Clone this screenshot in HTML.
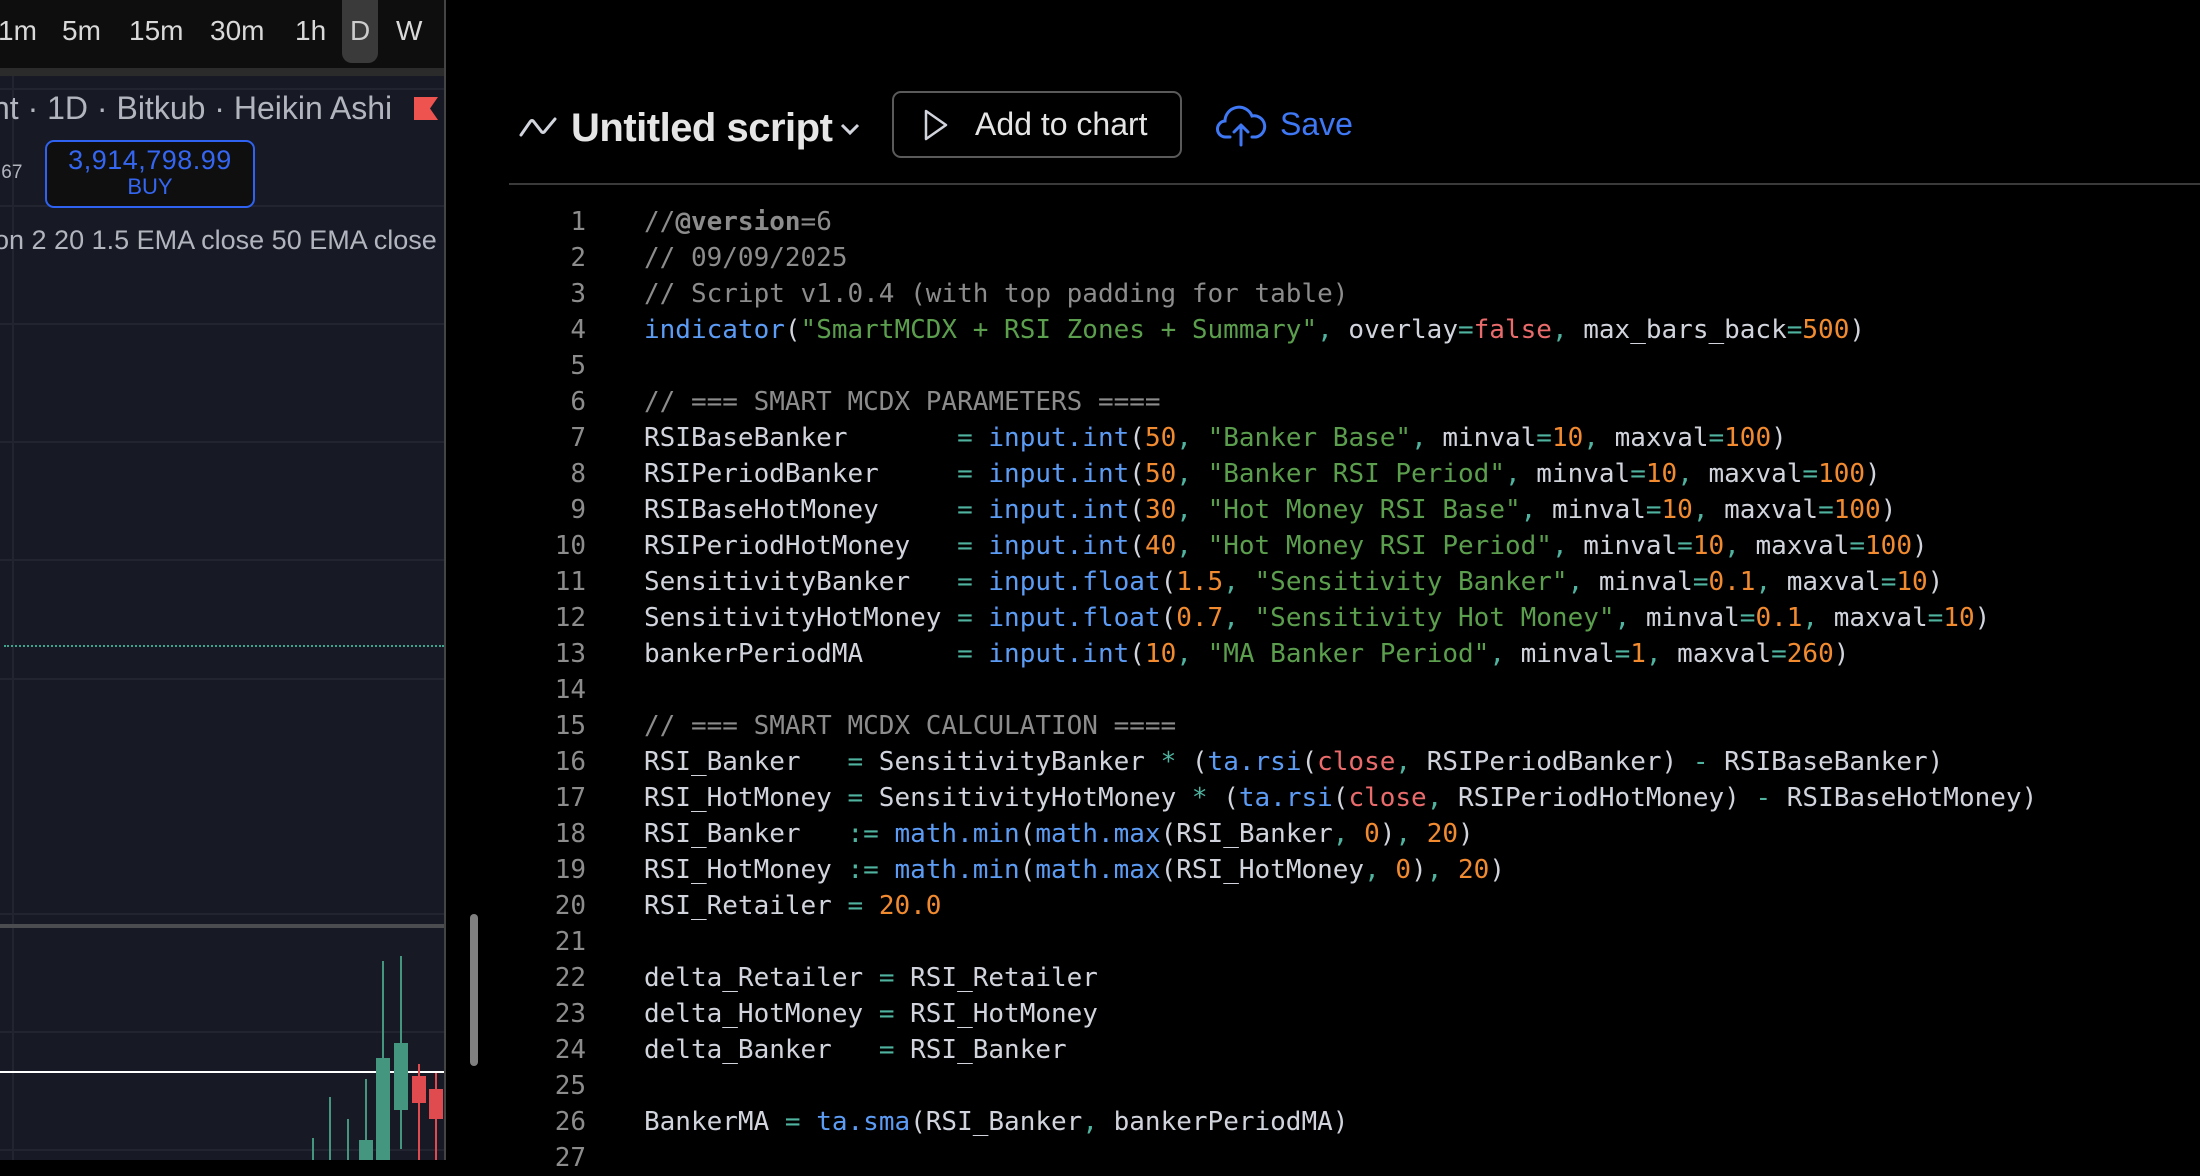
<!DOCTYPE html>
<html><head><meta charset="utf-8"><style>
*{margin:0;padding:0;box-sizing:border-box}
body{width:2200px;height:1160px;background:#000;overflow:hidden;position:relative;font-family:"Liberation Sans",sans-serif}
.abs{position:absolute}
#left{left:0;top:0;width:444px;height:1160px;background:#171a24;overflow:hidden}
#tb{left:0;top:0;width:444px;height:68px;background:#0e0e0e}
.tf{position:absolute;top:15px;font-size:28px;color:#d9d9d9}
.gl{position:absolute;left:0;width:444px;height:2px;background:#22252f}
pre{font-family:"DejaVu Sans Mono","Liberation Mono",monospace;font-size:26px;line-height:36px;color:#d1d4dc}
.c{color:#8c8c8c}.f{color:#5c9cf5}.s{color:#5b9e4d}.n{color:#f28b30}.o{color:#4fb3a0}.k{color:#ea6b6b}
</style></head><body>
<div id="left" class="abs">
  <div id="tb" class="abs"></div>
  <div class="abs" style="left:342px;top:0;width:36px;height:63px;background:#3a3a3a;border-radius:0 0 10px 10px"></div>
  <div class="tf" style="left:-2px">1m</div>
  <div class="tf" style="left:62px">5m</div>
  <div class="tf" style="left:129px">15m</div>
  <div class="tf" style="left:210px">30m</div>
  <div class="tf" style="left:295px">1h</div>
  <div class="tf" style="left:350px;color:#ccc">D</div>
  <div class="tf" style="left:396px">W</div>
  <div class="abs" style="left:0;top:68px;width:444px;height:8px;background:#2b2b2b"></div>
  <div class="abs" style="left:12px;top:76px;width:2px;height:1084px;background:#22252f"></div>
  <div class="gl" style="top:88px"></div><div class="gl" style="top:205px"></div><div class="gl" style="top:323px"></div><div class="gl" style="top:441px"></div><div class="gl" style="top:559px"></div><div class="gl" style="top:678px"></div><div class="gl" style="top:913px"></div><div class="gl" style="top:1031px"></div><div class="gl" style="top:1149px"></div>
  <div class="abs" style="left:0;top:924px;width:444px;height:4px;background:#4b4c50"></div>
  <div class="abs" style="left:4px;top:645px;width:440px;height:0;border-top:2px dotted #3aa58c"></div>
  <div class="abs" style="left:-8px;top:90px;font-size:32px;color:#b2b5be;white-space:nowrap">nt · 1D · Bitkub · Heikin Ashi</div>
  <svg class="abs" style="left:414px;top:97px" width="24" height="23"><path d="M0 0H24L16 11.5L24 23H0Z" fill="#ef5350"/></svg>
  <div class="abs" style="left:-4px;top:162px;font-size:19px;color:#b2b5be">.67</div>
  <div class="abs" style="left:45px;top:140px;width:210px;height:68px;border:2px solid #2f62f0;border-radius:9px;background:#0f0f0f;text-align:center;color:#3566f2">
    <div style="font-size:27px;margin-top:2px;line-height:32px;letter-spacing:0.5px">3,914,798.99</div>
    <div style="font-size:22px;line-height:22px">BUY</div>
  </div>
  <div class="abs" style="left:-6px;top:225px;font-size:27px;color:#b2b5be;white-space:nowrap">on 2 20 1.5 EMA close 50 EMA close</div>
  <div class="abs" style="left:0;top:1071px;width:444px;height:2px;background:#fff"></div>
  <svg class="abs" style="left:0;top:900px" width="444" height="260">
    <g stroke="#44967f" stroke-width="2"><line x1="313" y1="238" x2="313" y2="260"/><line x1="330" y1="197" x2="330" y2="260"/><line x1="348" y1="219" x2="348" y2="260"/><line x1="366" y1="179" x2="366" y2="260"/><line x1="383" y1="61" x2="383" y2="260"/><line x1="401" y1="56" x2="401" y2="249"/></g>
    <g fill="#44967f"><rect x="359" y="240" width="14" height="20"/><rect x="376" y="158" width="14" height="102"/><rect x="394" y="143" width="14" height="67"/></g>
    <g stroke="#e04b4f" stroke-width="2"><line x1="419" y1="164" x2="419" y2="260"/><line x1="436" y1="173" x2="436" y2="260"/></g>
    <g fill="#e04b4f"><rect x="412" y="176" width="14" height="27"/><rect x="429" y="189" width="14" height="30"/></g>
  </svg>
</div>
<div class="abs" style="left:444px;top:0;width:2px;height:1160px;background:#444"></div>
<div class="abs" style="left:470px;top:914px;width:8px;height:152px;background:#808080;border-radius:4px"></div>

<svg class="abs" style="left:519px;top:115px" width="38" height="24"><path d="M2 20 L11 7 Q13 4 15 7 L22 16 Q24 19 26 16 L36 4" stroke="#d1d4dc" stroke-width="3" fill="none" stroke-linecap="round" stroke-linejoin="round"/></svg>
<div class="abs" style="left:571px;top:106px;font-size:40px;font-weight:bold;color:#e5e5e5;white-space:nowrap;letter-spacing:-0.5px">Untitled script</div>
<svg class="abs" style="left:840px;top:123px" width="20" height="14"><path d="M2 2L10 10L18 2" stroke="#d1d4dc" stroke-width="3" fill="none"/></svg>
<div class="abs" style="left:892px;top:91px;width:290px;height:67px;border:2px solid #5a5a5a;border-radius:9px"></div>
<svg class="abs" style="left:922px;top:108px" width="28" height="34"><path d="M4 3L24 17L4 31Z" stroke="#d1d4dc" stroke-width="2.5" fill="none" stroke-linejoin="round"/></svg>
<div class="abs" style="left:975px;top:106px;font-size:32px;color:#e5e5e5">Add to chart</div>
<svg class="abs" style="left:1216px;top:103px" width="52" height="44"><path d="M14 34H10A8 8 0 0 1 9 18A14 14 0 0 1 36 13A10 10 0 0 1 40 34H36" stroke="#3f78f5" stroke-width="3" fill="none" stroke-linecap="round"/><path d="M25 42V22M18 29L25 22L32 29" stroke="#3f78f5" stroke-width="3" fill="none" stroke-linecap="round" stroke-linejoin="round"/></svg>
<div class="abs" style="left:1280px;top:106px;font-size:32px;color:#3f78f5">Save</div>
<div class="abs" style="left:509px;top:183px;width:1691px;height:2px;background:#3a3a3a"></div>

<pre class="abs" style="left:520px;top:204px;width:66px;text-align:right;color:#8c8c8c">1
2
3
4
5
6
7
8
9
10
11
12
13
14
15
16
17
18
19
20
21
22
23
24
25
26
27</pre>
<pre class="abs" style="left:644px;top:204px"><span class="c">//<b>@version</b>=6</span>
<span class="c">// 09/09/2025</span>
<span class="c">// Script v1.0.4 (with top padding for table)</span>
<span class="f">indicator</span>(<span class="s">"SmartMCDX + RSI Zones + Summary"</span><span class="o">,</span> overlay<span class="o">=</span><span class="k">false</span><span class="o">,</span> max_bars_back<span class="o">=</span><span class="n">500</span>)

<span class="c">// === SMART MCDX PARAMETERS ====</span>
RSIBaseBanker       <span class="o">=</span> <span class="f">input.int</span>(<span class="n">50</span><span class="o">,</span> <span class="s">"Banker Base"</span><span class="o">,</span> minval<span class="o">=</span><span class="n">10</span><span class="o">,</span> maxval<span class="o">=</span><span class="n">100</span>)
RSIPeriodBanker     <span class="o">=</span> <span class="f">input.int</span>(<span class="n">50</span><span class="o">,</span> <span class="s">"Banker RSI Period"</span><span class="o">,</span> minval<span class="o">=</span><span class="n">10</span><span class="o">,</span> maxval<span class="o">=</span><span class="n">100</span>)
RSIBaseHotMoney     <span class="o">=</span> <span class="f">input.int</span>(<span class="n">30</span><span class="o">,</span> <span class="s">"Hot Money RSI Base"</span><span class="o">,</span> minval<span class="o">=</span><span class="n">10</span><span class="o">,</span> maxval<span class="o">=</span><span class="n">100</span>)
RSIPeriodHotMoney   <span class="o">=</span> <span class="f">input.int</span>(<span class="n">40</span><span class="o">,</span> <span class="s">"Hot Money RSI Period"</span><span class="o">,</span> minval<span class="o">=</span><span class="n">10</span><span class="o">,</span> maxval<span class="o">=</span><span class="n">100</span>)
SensitivityBanker   <span class="o">=</span> <span class="f">input.float</span>(<span class="n">1.5</span><span class="o">,</span> <span class="s">"Sensitivity Banker"</span><span class="o">,</span> minval<span class="o">=</span><span class="n">0.1</span><span class="o">,</span> maxval<span class="o">=</span><span class="n">10</span>)
SensitivityHotMoney <span class="o">=</span> <span class="f">input.float</span>(<span class="n">0.7</span><span class="o">,</span> <span class="s">"Sensitivity Hot Money"</span><span class="o">,</span> minval<span class="o">=</span><span class="n">0.1</span><span class="o">,</span> maxval<span class="o">=</span><span class="n">10</span>)
bankerPeriodMA      <span class="o">=</span> <span class="f">input.int</span>(<span class="n">10</span><span class="o">,</span> <span class="s">"MA Banker Period"</span><span class="o">,</span> minval<span class="o">=</span><span class="n">1</span><span class="o">,</span> maxval<span class="o">=</span><span class="n">260</span>)

<span class="c">// === SMART MCDX CALCULATION ====</span>
RSI_Banker   <span class="o">=</span> SensitivityBanker <span class="o">*</span> (<span class="f">ta.rsi</span>(<span class="k">close</span><span class="o">,</span> RSIPeriodBanker) <span class="o">-</span> RSIBaseBanker)
RSI_HotMoney <span class="o">=</span> SensitivityHotMoney <span class="o">*</span> (<span class="f">ta.rsi</span>(<span class="k">close</span><span class="o">,</span> RSIPeriodHotMoney) <span class="o">-</span> RSIBaseHotMoney)
RSI_Banker   <span class="o">:=</span> <span class="f">math.min</span>(<span class="f">math.max</span>(RSI_Banker<span class="o">,</span> <span class="n">0</span>)<span class="o">,</span> <span class="n">20</span>)
RSI_HotMoney <span class="o">:=</span> <span class="f">math.min</span>(<span class="f">math.max</span>(RSI_HotMoney<span class="o">,</span> <span class="n">0</span>)<span class="o">,</span> <span class="n">20</span>)
RSI_Retailer <span class="o">=</span> <span class="n">20.0</span>

delta_Retailer <span class="o">=</span> RSI_Retailer
delta_HotMoney <span class="o">=</span> RSI_HotMoney
delta_Banker   <span class="o">=</span> RSI_Banker

BankerMA <span class="o">=</span> <span class="f">ta.sma</span>(RSI_Banker<span class="o">,</span> bankerPeriodMA)
</pre>
</body></html>
